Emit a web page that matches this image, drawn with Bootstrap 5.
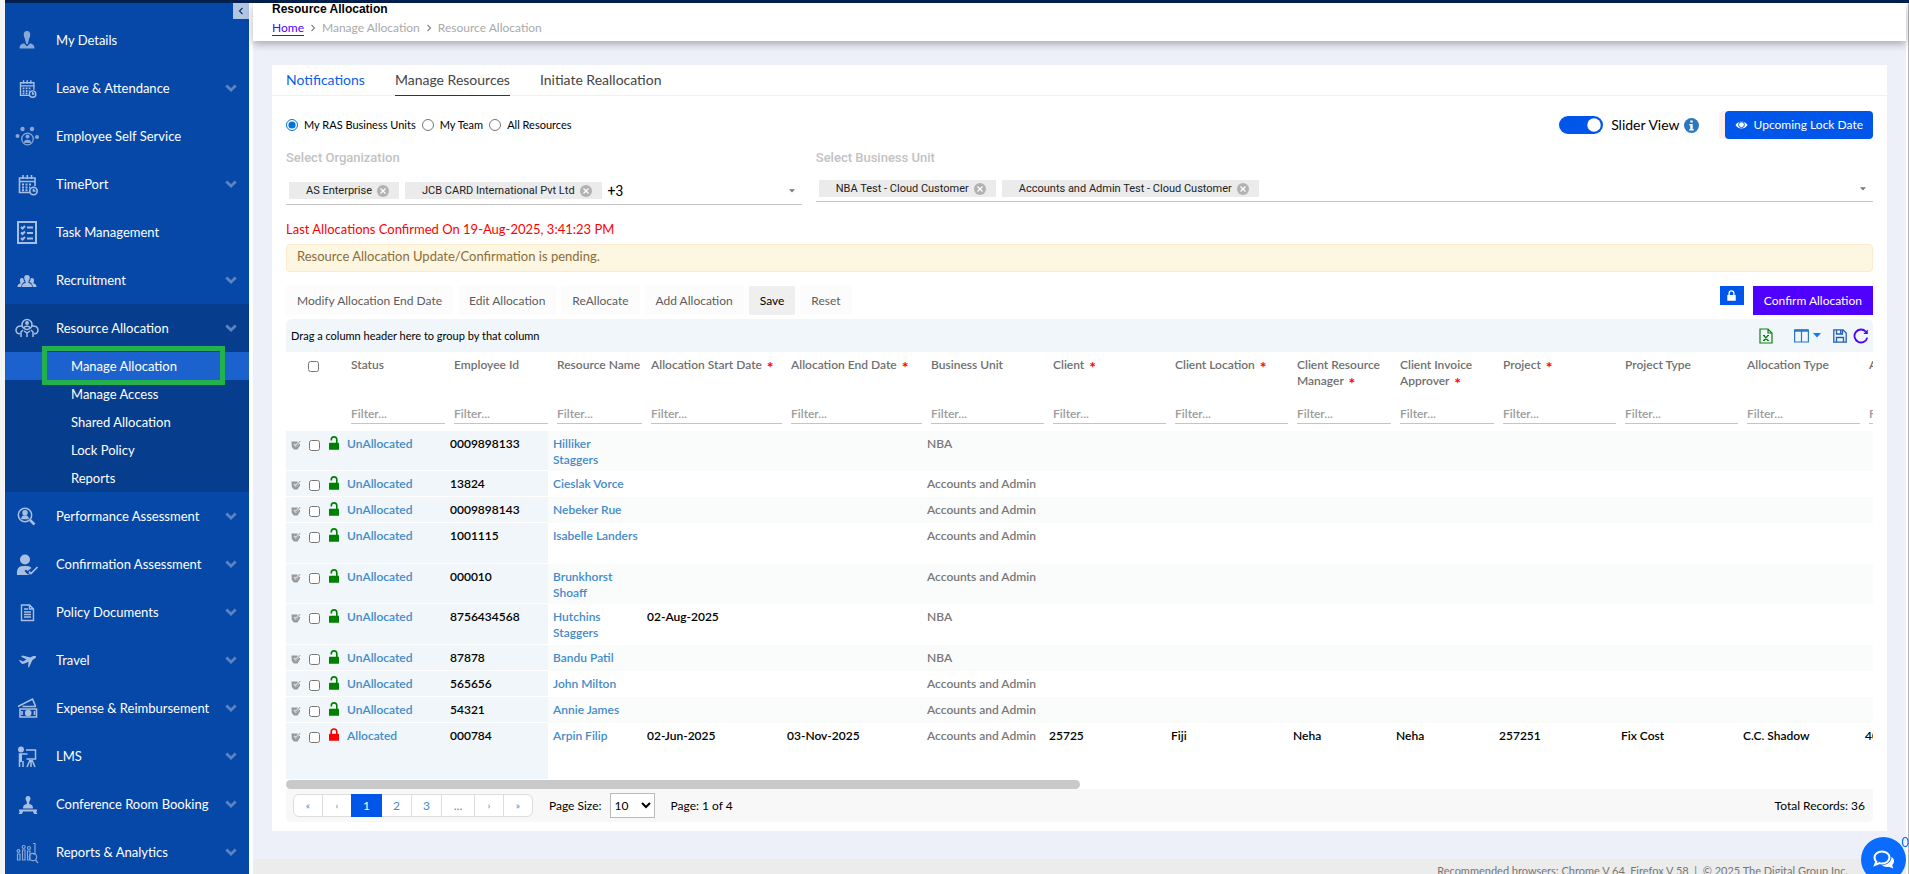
<!DOCTYPE html>
<html lang="en">
<head>
<meta charset="utf-8">
<meta name="viewport" content="width=device-width, initial-scale=1">
<title>Resource Allocation</title>
<link rel="stylesheet" href="https://cdn.jsdelivr.net/npm/bootstrap@5.3.0/dist/css/bootstrap.min.css">
<style>
:root{--blue:#0056e8;--violet:#4f00ff;--link:#428bca;--side:#0648a8}
body{font-family:Lato,"Liberation Sans",sans-serif;font-size:13px;line-height:16px;color:#000;background:#f4f4f5;height:100vh;overflow:hidden;padding-left:5px}
svg{display:block;flex:none}
a{text-decoration:none}
.topline{height:3px;background:#02204f}
.shell{height:calc(100vh - 3px);border-right:1px solid #b5b5b8}
.sidebar{width:244px;background:var(--side);flex:none;padding-top:13px;position:relative}
.toggle{position:absolute;right:0;top:0;width:16px;height:16px;padding:0;border:0;background:#b1c5e5;color:#16345f;display:grid;place-items:center}
.side-link{display:flex;align-items:center;height:48px;padding:0 12px 1px 9px;color:#fff;font-size:13px;line-height:20px}
.side-link .ico{width:26px;height:26px;margin-right:16px;color:#a9bfe2}
.side-link .chev{width:12px;height:8px;margin-left:auto;color:#5d84bf}
.side-link:hover,.sub-link:hover{color:#fff}
.open-group{background:#063d8d}
.sub-link{display:block;height:28px;line-height:28px;padding-left:66px;color:#fff;font-size:13px}
.sub-link.current{background:#1c62ce;position:relative}
.sub-link.current::after{content:"";position:absolute;left:37px;right:24px;top:-6px;bottom:-5px;border:5px solid #22b14c}
.main-pane{margin-left:4px;background:#edf0f9;border-right:2px solid #fff;min-width:0}
.gutter{background:#fff}
.page-head{background:#fff;height:38px;padding:0 19px;box-shadow:0 3px 8px rgba(0,0,0,.3);flex:none;position:relative}
.page-title{font:bold 12px/12px "Liberation Sans",Arial,sans-serif;margin:0}
.crumbs{font-size:12px;line-height:16px;color:#aaa;margin-top:5px;gap:6px}
.crumbs a{color:var(--violet);border-bottom:1px solid var(--violet);line-height:14px}
.panel{background:#fff;margin:24px 19px 28px;padding-bottom:9px}
.tabs{border-bottom:1px solid #f1f1f3;padding:0 14px;gap:30px}
.tabs a{font-size:14px;line-height:30px;height:31px;color:#444;margin-bottom:-1px;border-bottom:1px solid transparent}
.tabs a.unread{color:#0b5ee8}
.tabs a.current{border-color:var(--violet)}
.panel-body{padding:15px 14px 0}
.scope{font-size:11px;gap:6px}
.scope input{margin:0;width:12px;height:12px;accent-color:#0075d8}
.slider-view{font-size:14px}
.slider-view .form-check-input{width:44px;height:18px;margin:0;border:0;background-color:var(--blue)}
.lockdate{background:var(--blue);color:#fff;border:0;border-radius:4px;height:28px;padding:0 10px;font-size:12px;box-shadow:-6px 0 0 #fee;gap:6px;margin-left:26px}
.fields{margin-top:11px;gap:14px}
.field-label{font:500 13px/16px Roboto,sans-serif;color:#c2c2c2}
.picker{border-bottom:1px solid #c4c4c4;margin-top:14px;gap:6px;padding:2px 7px 5px 3px;font-family:Roboto,sans-serif}
.unit-field .picker{margin-top:12px;padding-bottom:4px}
.chip{background:#ebebeb;height:17px;font-size:11px;line-height:17px;padding:0 10px 0 17px;gap:5px;color:#222}
.more{font-size:14px}
.chip svg{width:12px;height:12px;color:#b2b2b2}
.chip button,.picker>button{border:0;background:none;padding:0}
.confirmed{color:red;font-size:13px;line-height:20px;margin-top:14px}
.unit-field{min-width:0}
.notice{background:#fdf6e1;border:1px solid #faebcc;border-radius:4px;color:#8a6d3b;font-size:13px;line-height:20px;padding:1px 10px 5px;margin-top:5px}
.tools{margin-top:14px;gap:5px}
.tools .tool{border:0;background:#fcfcfc;color:#5c5c5c;height:29px;padding:0 11px;font-size:12px}
.tools .tool.ready{background:#efefef;color:#000}
.lockbtn{border:0;padding:0;background:var(--blue);color:#fff;width:24px;height:19px;display:grid;place-items:center;margin-right:4px}
.tools .confirm{background:var(--violet);color:#fff;border:0;height:29px;padding:0 11px;font-size:12px}
.groupbar{background:#f0f6f9;border-radius:6px 6px 0 0;height:33px;padding:0 4px 0 5px;margin-top:4px;font-size:11px}
.groupbar button{border:0;background:none;padding:0}
.act-cols{margin-left:21px}.act-save{margin-left:12px}.act-refresh{margin-left:6px}
.grid-wrap{overflow:hidden}
.grid-table{table-layout:fixed;width:1696px;font-size:12px;font-weight:600;margin:0}
.c-pick{width:56px}.c-a{width:103px}.c-name{width:94px}.c-date{width:140px}.c-b{width:122px}
.grid-table th{height:79px;padding:5px 0 7px 9px;vertical-align:top;color:#707070;font-weight:600}
.th-box{display:flex;flex-direction:column;justify-content:space-between;height:67px}
.grid-table th input:not([type=checkbox]){width:100%;height:21px;border:0;border-bottom:1px solid #c4c4c4;padding:0;font-weight:600;color:#707070}
.grid-table th input::placeholder{color:#9b9b9b;opacity:1}
.grid-table i{color:red;font:bold 16px/8px Lato,sans-serif;margin-left:2px;vertical-align:-4px}
.grid-table td{padding:5px 4px 3px 5px;vertical-align:top;height:26px}
.grid-table tbody tr:nth-child(odd){background:#fafcfb}
.grid-table td:nth-child(-n+3){background:#f0f6f9;box-shadow:inset 0 -1px #fff}
.grid-table tr.roomy td{height:41px}
.grid-table tr.last td{height:57px}
.grid-table td a{color:var(--link)}
.grid-table td.unit{color:#777}
.grid-table input[type=checkbox]{width:11px;height:11px;margin:0;display:block}
.grid-table .pick-all{margin:4px 0 0 13px!important}
.picks{display:flex;align-items:center;height:16px}
.picks input{margin:2px 9px 0 8px!important}
.picks .edit{margin-top:2px;color:#999}
.picks .lk{margin-top:-3px;color:green}
.picks .lk.shut{color:red}
.thumb{width:50%;height:9px;border-radius:5px;background:#c9c9c9}
.pager{background:#f8f8f8;border-radius:0 0 5px 5px;height:33px;padding:0 8px 0 7px;font-size:12px}
.pages .page-link{height:23px;padding:0;line-height:21px;text-align:center;color:var(--link);font-size:12px;border-color:#ddd}
.pages .active .page-link{background:var(--blue);border-color:var(--blue);color:#fff}
.pages .tiny{font-size:10px}
.pages .w1{width:30px}.pages .w2{width:31px}.pages .w3{width:34px}
.pager select{width:45px;height:25px;border:1px solid #bbb;background:#fff;font-size:12px;margin:0 16px 0 8px}
.foot{flex:1 0 15px;background:#ececec;color:#777;font-size:11px;line-height:16px;padding:4px 58px 0 0}
.chat{position:fixed;right:3px;bottom:-8px;width:45px;height:45px;border-radius:50%;border:0;padding:0;background:#0a6cff;color:#fff;display:grid;place-items:center}
.chat-count{position:fixed;right:0;bottom:24px;color:#0a6cff;font-size:13px;line-height:16px}
</style>
</head>
<body>
<svg width="0" height="0" class="position-absolute" aria-hidden="true">
<symbol id="chev" viewBox="0 0 12 8"><path d="M1.300 1.500 6 6l4.700-4.500" fill="none" stroke="currentColor" stroke-width="2.800"/></symbol>
<symbol id="x" viewBox="0 0 12 12"><circle cx="6" cy="6" r="6" fill="currentColor"/><path d="m3.500 3.500 5 5m0-5-5 5" stroke="#fff" stroke-width="1.200"/></symbol>
<symbol id="caret" viewBox="0 0 8 5"><path d="M0 0h8L4 4.500z" fill="currentColor"/></symbol>
<symbol id="lock" viewBox="0 0 10 13"><path d="M2.200 6V3.800a2.800 2.800 0 0 1 5.600 0V6" fill="none" stroke="currentColor" stroke-width="1.600"/><rect y="5.800" width="10" height="7" rx=".6" fill="currentColor"/></symbol>
<symbol id="unlock" viewBox="0 0 10 14"><path d="M7.800 7V3.600a2.700 2.700 0 0 0-5.500 0V4.600" fill="none" stroke="currentColor" stroke-width="1.600"/><rect y="6.800" width="10" height="7" rx=".4" fill="currentColor"/></symbol>
<symbol id="edit" viewBox="0 0 10 10"><path d="M.5 1.500h6v1.300L4.800 4.600 3.500 3.500 2.300 4.700l2.500 2.600L8 3.800 9 4v1.500L6.500 9.500H3L.8 7z" fill="currentColor"/><path d="m2.800 4.300 2 2L9.200 1" fill="none" stroke="currentColor"/></symbol>
<symbol id="cal" viewBox="0 0 26 26"><g fill="none" stroke="currentColor" stroke-width="1.600"><path d="M21 15V7H5.500v14.500H16M5.500 10.500H21M9 4v4m4.300-4v4M17.500 4v4"/><circle cx="19.500" cy="20" r="3.700"/><path d="M19.500 17.700V20h2"/><path d="M8 13.500h10M8 16.500h8M8 19.300h6" stroke-dasharray="2 1.500" stroke-width="2"/></g></symbol>
<symbol id="person" viewBox="0 0 26 26"><g fill="currentColor"><path d="M13 4c2.500 0 3.500 1.800 3.200 4-.2 2-.8 3.200-1.200 4l-1.200 5h-1.600L11 12c-.4-.8-1-2-1.200-4C9.500 5.800 10.500 4 13 4z"/><path d="M5.500 21.500c0-3 1.200-4.500 4.500-5.300l2.600 2.800h.8l2.600-2.800c3.300.8 4.500 2.300 4.500 5.300z"/></g></symbol>
</svg>

<div class="topline"></div>
<div class="shell d-flex gutter">
  <nav class="sidebar" aria-label="Main menu">
    <button class="toggle" type="button" aria-label="Collapse menu"><svg width="6" height="8" viewBox="0 0 6 8"><path d="M4.500 1 1.500 4l3 3" fill="none" stroke="currentColor" stroke-width="1.200"/></svg></button>
    <a class="side-link" href="#"><svg class="ico" opacity=".8"><use href="#person"/></svg>My Details</a>
    <a class="side-link" href="#"><svg class="ico" viewBox="-2 -2 30 30"><use href="#cal" width="26" height="26"/></svg>Leave &amp; Attendance<svg class="chev"><use href="#chev"/></svg></a>
    <a class="side-link" href="#"><svg class="ico" viewBox="0 0 26 26" opacity=".8"><g fill="currentColor"><circle cx="8.500" cy="6" r="2.200"/><circle cx="18" cy="6" r="2.200"/><circle cx="3.500" cy="13" r="2"/><circle cx="23" cy="14" r="2"/><circle cx="13.500" cy="13.500" r="2"/><path d="M10 20c0-2 1-3.200 3.500-3.200S17 18 17 20z"/></g><circle cx="13.500" cy="16" r="5.800" fill="none" stroke="currentColor" stroke-width="1.300"/></svg>Employee Self Service</a>
    <a class="side-link" href="#"><svg class="ico"><use href="#cal"/></svg>TimePort<svg class="chev"><use href="#chev"/></svg></a>
    <a class="side-link" href="#"><svg class="ico" viewBox="0 0 26 26" fill="none" stroke="currentColor" stroke-width="2"><path d="M4 3h18v21H4z"/><path d="m7 8 1.500 1.500L11 7m-4 6.500L8.500 15l2.500-2.500M7 19l1.500 1.500L11 18M13 8.500h6M13 14h6m-6 5.500h6"/></svg>Task Management</a>
    <a class="side-link" href="#"><svg class="ico" viewBox="0 0 26 26" fill="currentColor"><path d="M13 8c2.300 0 3 1.500 2.700 3.300-.2 1.500-.8 2.300-1.200 2.800v1.800c2.500.6 3.500 1.300 3.500 4.100H8c0-2.800 1-3.500 3.500-4.100v-1.800c-.4-.5-1-1.300-1.200-2.800C10 9.500 10.700 8 13 8z"/><path d="M8 11c1 0 1.300.5 1.500 1.300.3 1.500.8 2 1.200 2.500-1.900 1-3.200 2-3.500 5.200H3.500c0-2.300 1-3.300 3.200-3.800-1.200-2-1.200-5.200 1.300-5.200zM18 11c-1 0-1.300.5-1.500 1.300-.3 1.500-.8 2-1.200 2.500 1.900 1 3.200 2 3.500 5.200h3.700c0-2.300-1-3.300-3.200-3.800 1.200-2 1.200-5.200-1.300-5.200z"/></svg>Recruitment<svg class="chev"><use href="#chev"/></svg></a>
    <div class="open-group">
      <a class="side-link" href="#"><svg class="ico" viewBox="0 0 26 26" fill="none" stroke="currentColor" stroke-width="1.500"><circle cx="13" cy="9.500" r="5"/><circle cx="13" cy="8" r="1.200" fill="currentColor"/><path d="M10 13c.3-2.500 5.700-2.500 6 0M8 11c-3-.5-6 1-6 4s2 4 4 3.500m12-7.500c3-.5 6 1 6 4s-2 4-4 3.500M7 22v-5l2-2m10 7v-5l-2-2M13 22v-4l-3-2m3 2 3-2"/></svg>Resource Allocation<svg class="chev"><use href="#chev"/></svg></a>
      <a class="sub-link current" href="#">Manage Allocation</a>
      <a class="sub-link" href="#">Manage Access</a>
      <a class="sub-link" href="#">Shared Allocation</a>
      <a class="sub-link" href="#">Lock Policy</a>
      <a class="sub-link" href="#">Reports</a>
    </div>
    <a class="side-link" href="#"><svg class="ico" viewBox="0 0 26 26" fill="none" stroke="currentColor" stroke-width="1.500"><circle cx="11" cy="12" r="6.700"/><path d="m16 17 4.500 4.500" stroke-width="2.500"/><circle cx="11" cy="9.800" r="2" fill="currentColor"/><path d="M8 15.500c.3-3.500 5.700-3.500 6 0z" fill="currentColor"/></svg>Performance Assessment<svg class="chev"><use href="#chev"/></svg></a>
    <a class="side-link" href="#"><svg class="ico" viewBox="0 0 26 26"><circle cx="11" cy="8.500" r="5" fill="currentColor"/><path d="M3 24c-.5-6 1.500-9 6-9h4c2 0 3.500.7 4.500 2l-4 3-1.500-1.500L10.500 20l3.300 3.500 3-2.200c-.8 2-1.500 2.700-3 2.700z" fill="currentColor"/><path d="m15 20.500 2 2 6.500-6.500" fill="none" stroke="currentColor" stroke-width="1.700"/></svg>Confirmation Assessment<svg class="chev"><use href="#chev"/></svg></a>
    <a class="side-link" href="#"><svg class="ico" viewBox="0 0 26 26" fill="none" stroke="currentColor" stroke-width="1.400"><path d="M7.500 6h8l4 4v11.500h-12zM15.500 6v4h4M10 10h4m-4 3h7m-7 2.500h7M10 18h7"/></svg>Policy Documents<svg class="chev"><use href="#chev"/></svg></a>
    <a class="side-link" href="#"><svg class="ico" viewBox="0 0 26 26" fill="currentColor"><path d="M22 9.500c-.8-.8-3.500-.3-5.500.9L8.500 8.500 7 9.500l5.500 3-3.500 2-3-1.500-1 .6L8 17c2.500-.3 4-1 6.500-2.200L14 20.500l1.300-.7L18.500 13c2-1.200 4.200-2.500 3.500-3.500z"/></svg>Travel<svg class="chev"><use href="#chev"/></svg></a>
    <a class="side-link" href="#"><svg class="ico" viewBox="0 0 26 26" fill="none" stroke="currentColor" stroke-width="1.600"><path d="M6 14h16.500v8H6zM7 22h15M4 11.500 18.500 4l3 7M8.500 11.500H22"/><circle cx="14.200" cy="18" r="2.500" fill="currentColor"/><path d="M8 16v4m12.500-4v4"/></svg>Expense &amp; Reimbursement<svg class="chev"><use href="#chev"/></svg></a>
    <a class="side-link" href="#"><svg class="ico" viewBox="0 0 26 26" fill="none" stroke="currentColor" stroke-width="1.500"><circle cx="7" cy="6.500" r="2.200" fill="currentColor"/><path d="M5.500 24V11h8M9 24v-6m3-11h9.500v9h-9m3.500 1-3 7m4-7v7m1-7 3 7"/><path d="M6.500 11v8" stroke-width="3"/></svg>LMS<svg class="chev"><use href="#chev"/></svg></a>
    <a class="side-link" href="#"><svg class="ico" viewBox="0 0 26 26" fill="currentColor"><path d="M14 5c2 0 2.600 1.400 2.400 3-.2 1.300-.8 2.200-1.200 2.700V13c2.500.6 3.800 1.500 3.800 4.500H9c0-3 1.300-3.900 3.800-4.500v-2.300c-.4-.5-1-1.400-1.200-2.700C11.400 6.400 12 5 14 5zM5 18.500h18v2H5zM6 20.500h3l-1 2.500H4.500zM19 20.500h3l1.500 2.500H20z"/></svg>Conference Room Booking<svg class="chev"><use href="#chev"/></svg></a>
    <a class="side-link" href="#"><svg class="ico" viewBox="0 0 26 26" fill="none" stroke="currentColor" stroke-width="1.200" opacity=".8"><path d="M3.500 15h2.500v6H3.500zM8.500 11H11v10H8.500zM13.500 12H16v9h-2.500zM19 4.500h2V15h-2"/><circle cx="4.500" cy="12" r="1.400"/><circle cx="9.700" cy="8" r="1.500"/><circle cx="15" cy="9" r="1.500"/><circle cx="19" cy="18" r="3.700"/><path d="m21.500 21 2.500 3"/></svg>Reports &amp; Analytics<svg class="chev"><use href="#chev"/></svg></a>
  </nav>

  <div class="main-pane flex-grow-1 d-flex flex-column">
    <header class="page-head">
      <h1 class="page-title">Resource Allocation</h1>
      <nav class="crumbs d-flex align-items-center" aria-label="Breadcrumb">
        <a href="#">Home</a>
        <svg width="6" height="8" viewBox="0 0 6 8"><path d="m1.500 1 3 3-3 3" fill="none" stroke="#888" stroke-width="1.200"/></svg>
        <span>Manage Allocation</span>
        <svg width="6" height="8" viewBox="0 0 6 8"><path d="m1.500 1 3 3-3 3" fill="none" stroke="#888" stroke-width="1.200"/></svg>
        <span>Resource Allocation</span>
      </nav>
    </header>

    <main class="panel">
      <nav class="tabs d-flex" aria-label="Sections">
        <a class="unread" href="#">Notifications</a>
        <a class="current" href="#">Manage Resources</a>
        <a href="#">Initiate Reallocation</a>
      </nav>
      <div class="panel-body">
        <div class="d-flex align-items-center">
          <div class="scope d-flex align-items-center">
            <input type="radio" name="scope" id="s1" checked><label for="s1">My RAS Business Units</label>
            <input type="radio" name="scope" id="s2"><label for="s2">My Team</label>
            <input type="radio" name="scope" id="s3"><label for="s3">All Resources</label>
          </div>
          <div class="slider-view d-flex align-items-center ms-auto form-switch p-0">
            <input class="form-check-input me-2" type="checkbox" role="switch" id="slider" checked>
            <label for="slider">Slider View</label>
            <svg class="ms-1" width="15" height="15" viewBox="0 0 15 15"><circle cx="7.500" cy="7.500" r="7.500" fill="#2a78bf"/><path d="M6.300 2.500h2.400v2H6.300zM5.300 6h3.400v5h1v1.500H5.300V11h1V7.500h-1z" fill="#fff"/></svg>
          </div>
          <button class="lockdate d-flex align-items-center" type="button"><svg width="13" height="10" viewBox="0 0 13 10"><path d="M.5 5C3.500.2 9.500.2 12.500 5 9.500 9.800 3.500 9.800.5 5z" fill="#fff"/><circle cx="6.500" cy="4.700" r="2.900" fill="none" stroke="#0056e8"/></svg>Upcoming Lock Date</button>
        </div>

        <div class="fields d-flex">
          <div style="width:32.500%">
            <div class="field-label">Select Organization</div>
            <div class="picker d-flex align-items-center">
              <span class="chip d-flex align-items-center">AS Enterprise<button type="button" aria-label="Remove"><svg><use href="#x"/></svg></button></span>
              <span class="chip d-flex align-items-center">JCB CARD International Pvt Ltd<button type="button" aria-label="Remove"><svg><use href="#x"/></svg></button></span>
              <span class="more">+3</span>
              <button class="ms-auto" type="button" aria-label="Open organizations"><svg width="6" height="4" color="#777"><use href="#caret"/></svg></button>
            </div>
          </div>
          <div class="unit-field flex-grow-1">
            <div class="field-label">Select Business Unit</div>
            <div class="picker d-flex align-items-center">
              <span class="chip d-flex align-items-center">NBA Test - Cloud Customer<button type="button" aria-label="Remove"><svg><use href="#x"/></svg></button></span>
              <span class="chip d-flex align-items-center">Accounts and Admin Test - Cloud Customer<button type="button" aria-label="Remove"><svg><use href="#x"/></svg></button></span>
              <button class="ms-auto" type="button" aria-label="Open business units"><svg width="6" height="4" color="#777"><use href="#caret"/></svg></button>
            </div>
          </div>
        </div>

        <div class="confirmed">Last Allocations Confirmed On 19-Aug-2025, 3:41:23 PM</div>
        <div class="notice" role="status">Resource Allocation Update/Confirmation is pending.</div>

        <div class="tools d-flex align-items-start">
          <button class="tool" type="button">Modify Allocation End Date</button>
          <button class="tool" type="button">Edit Allocation</button>
          <button class="tool" type="button">ReAllocate</button>
          <button class="tool" type="button">Add Allocation</button>
          <button class="tool ready" type="button">Save</button>
          <button class="tool" type="button">Reset</button>
          <button class="lockbtn ms-auto" type="button" aria-label="Lock"><svg width="9" height="11"><use href="#lock"/></svg></button>
          <button class="confirm" type="button">Confirm Allocation</button>
        </div>

        <div class="groupbar d-flex align-items-center">
          <span>Drag a column header here to group by that column</span>
          <button class="ms-auto" type="button" aria-label="Export to Excel"><svg width="14" height="16" viewBox="0 0 14 16" fill="none" stroke="#108010" stroke-width="1.200"><path d="M1 1h8l4 4v10H1zM9 1v4h4M4.800 7.500 9 12.500M9 7.500l-4.200 5M4 7.500h2m2 0h2m-6 5h2m2 0h2"/></svg></button>
          <button class="act-cols d-flex align-items-center gap-1" type="button" aria-label="Columns"><svg width="15" height="14" viewBox="0 0 15 14" fill="none" stroke="#2a78c8" stroke-width="1.200"><path d="M.6 1h13.800v12H.6zM7.500 1v12"/><path d="M.6 1.500h13.800" stroke-width="2.500"/></svg><svg width="8" height="5" color="#0a7aff"><use href="#caret"/></svg></button>
          <button class="act-save" type="button" aria-label="Save layout"><svg width="14" height="14" viewBox="0 0 14 14" fill="none" stroke="#1f5fb4" stroke-width="1.300"><path d="M.8.800H10L13.200 4v9.200H.8zM3.500 13V8.500h7V13M3.500 1v4h6V1M7.700 1.500v3"/></svg></button>
          <button class="act-refresh" type="button" aria-label="Refresh"><svg width="16" height="16" viewBox="0 0 16 16"><path d="M12.800 3.600a6.500 6.500 0 1 0 1.500 6" fill="none" stroke="#4f00ff" stroke-width="1.800"/><path d="M14.800 1.500v4.500h-4.500z" fill="#4f00ff"/></svg></button>
        </div>

        <div class="grid-wrap">
          <table class="grid-table">
            <colgroup><col class="c-pick"><col class="c-a"><col class="c-a"><col class="c-name"><col class="c-date"><col class="c-date"><col class="c-b"><col class="c-b"><col class="c-b"><col class="c-a"><col class="c-a"><col class="c-b"><col class="c-b"><col class="c-b"><col></colgroup>
            <thead>
              <tr>
                <th><input class="pick-all" type="checkbox" aria-label="Select all rows"></th>
                <th><div class="th-box"><span>Status</span><input placeholder="Filter..." aria-label="Filter status"></div></th>
                <th><div class="th-box"><span>Employee Id</span><input placeholder="Filter..." aria-label="Filter employee id"></div></th>
                <th><div class="th-box"><span>Resource Name</span><input placeholder="Filter..." aria-label="Filter resource name"></div></th>
                <th><div class="th-box"><span>Allocation Start Date <i>*</i></span><input placeholder="Filter..." aria-label="Filter start date"></div></th>
                <th><div class="th-box"><span>Allocation End Date <i>*</i></span><input placeholder="Filter..." aria-label="Filter end date"></div></th>
                <th><div class="th-box"><span>Business Unit</span><input placeholder="Filter..." aria-label="Filter business unit"></div></th>
                <th><div class="th-box"><span>Client <i>*</i></span><input placeholder="Filter..." aria-label="Filter client"></div></th>
                <th><div class="th-box"><span>Client Location <i>*</i></span><input placeholder="Filter..." aria-label="Filter client location"></div></th>
                <th><div class="th-box"><span>Client Resource Manager <i>*</i></span><input placeholder="Filter..." aria-label="Filter client resource manager"></div></th>
                <th><div class="th-box"><span>Client Invoice Approver <i>*</i></span><input placeholder="Filter..." aria-label="Filter client invoice approver"></div></th>
                <th><div class="th-box"><span>Project <i>*</i></span><input placeholder="Filter..." aria-label="Filter project"></div></th>
                <th><div class="th-box"><span>Project Type</span><input placeholder="Filter..." aria-label="Filter project type"></div></th>
                <th><div class="th-box"><span>Allocation Type</span><input placeholder="Filter..." aria-label="Filter allocation type"></div></th>
                <th><div class="th-box"><span>Allocation</span><input placeholder="Filter..." aria-label="Filter allocation"></div></th>
              </tr>
            </thead>
            <tbody>
              <tr><td><div class="picks"><svg class="edit" width="10" height="10"><use href="#edit"/></svg><input type="checkbox" aria-label="Select row"><svg class="lk" width="10" height="14"><use href="#unlock"/></svg></div></td><td><a href="#">UnAllocated</a></td><td>0009898133</td><td><a href="#">Hilliker Staggers</a></td><td></td><td></td><td class="unit">NBA</td><td colspan="8"></td></tr>
              <tr><td><div class="picks"><svg class="edit" width="10" height="10"><use href="#edit"/></svg><input type="checkbox" aria-label="Select row"><svg class="lk" width="10" height="14"><use href="#unlock"/></svg></div></td><td><a href="#">UnAllocated</a></td><td>13824</td><td><a href="#">Cieslak Vorce</a></td><td></td><td></td><td class="unit">Accounts and Admin</td><td colspan="8"></td></tr>
              <tr><td><div class="picks"><svg class="edit" width="10" height="10"><use href="#edit"/></svg><input type="checkbox" aria-label="Select row"><svg class="lk" width="10" height="14"><use href="#unlock"/></svg></div></td><td><a href="#">UnAllocated</a></td><td>0009898143</td><td><a href="#">Nebeker Rue</a></td><td></td><td></td><td class="unit">Accounts and Admin</td><td colspan="8"></td></tr>
              <tr class="roomy"><td><div class="picks"><svg class="edit" width="10" height="10"><use href="#edit"/></svg><input type="checkbox" aria-label="Select row"><svg class="lk" width="10" height="14"><use href="#unlock"/></svg></div></td><td><a href="#">UnAllocated</a></td><td>1001115</td><td><a href="#">Isabelle Landers</a></td><td></td><td></td><td class="unit">Accounts and Admin</td><td colspan="8"></td></tr>
              <tr><td><div class="picks"><svg class="edit" width="10" height="10"><use href="#edit"/></svg><input type="checkbox" aria-label="Select row"><svg class="lk" width="10" height="14"><use href="#unlock"/></svg></div></td><td><a href="#">UnAllocated</a></td><td>000010</td><td><a href="#">Brunkhorst Shoaff</a></td><td></td><td></td><td class="unit">Accounts and Admin</td><td colspan="8"></td></tr>
              <tr class="roomy"><td><div class="picks"><svg class="edit" width="10" height="10"><use href="#edit"/></svg><input type="checkbox" aria-label="Select row"><svg class="lk" width="10" height="14"><use href="#unlock"/></svg></div></td><td><a href="#">UnAllocated</a></td><td>8756434568</td><td><a href="#">Hutchins Staggers</a></td><td>02-Aug-2025</td><td></td><td class="unit">NBA</td><td colspan="8"></td></tr>
              <tr><td><div class="picks"><svg class="edit" width="10" height="10"><use href="#edit"/></svg><input type="checkbox" aria-label="Select row"><svg class="lk" width="10" height="14"><use href="#unlock"/></svg></div></td><td><a href="#">UnAllocated</a></td><td>87878</td><td><a href="#">Bandu Patil</a></td><td></td><td></td><td class="unit">NBA</td><td colspan="8"></td></tr>
              <tr><td><div class="picks"><svg class="edit" width="10" height="10"><use href="#edit"/></svg><input type="checkbox" aria-label="Select row"><svg class="lk" width="10" height="14"><use href="#unlock"/></svg></div></td><td><a href="#">UnAllocated</a></td><td>565656</td><td><a href="#">John Milton</a></td><td></td><td></td><td class="unit">Accounts and Admin</td><td colspan="8"></td></tr>
              <tr><td><div class="picks"><svg class="edit" width="10" height="10"><use href="#edit"/></svg><input type="checkbox" aria-label="Select row"><svg class="lk" width="10" height="14"><use href="#unlock"/></svg></div></td><td><a href="#">UnAllocated</a></td><td>54321</td><td><a href="#">Annie James</a></td><td></td><td></td><td class="unit">Accounts and Admin</td><td colspan="8"></td></tr>
              <tr class="last"><td><div class="picks"><svg class="edit" width="10" height="10"><use href="#edit"/></svg><input type="checkbox" aria-label="Select row"><svg class="lk shut" width="10" height="13"><use href="#lock"/></svg></div></td><td><a href="#">Allocated</a></td><td>000784</td><td><a href="#">Arpin Filip</a></td><td>02-Jun-2025</td><td>03-Nov-2025</td><td class="unit">Accounts and Admin</td><td>25725</td><td>Fiji</td><td>Neha</td><td>Neha</td><td>257251</td><td>Fix Cost</td><td>C.C. Shadow</td><td>40</td></tr>
            </tbody>
          </table>
          <div class="thumb"></div>
        </div>

        <div class="pager d-flex align-items-center">
          <ul class="pagination pages mb-0">
            <li class="page-item"><a class="page-link w1 tiny" href="#" aria-label="First">«</a></li>
            <li class="page-item"><a class="page-link w1 tiny" href="#" aria-label="Previous">‹</a></li>
            <li class="page-item active"><a class="page-link w2" href="#">1</a></li>
            <li class="page-item"><a class="page-link w2" href="#">2</a></li>
            <li class="page-item"><a class="page-link w2" href="#">3</a></li>
            <li class="page-item"><a class="page-link w3" href="#">...</a></li>
            <li class="page-item"><a class="page-link w1 tiny" href="#" aria-label="Next">›</a></li>
            <li class="page-item"><a class="page-link w1 tiny" href="#" aria-label="Last">»</a></li>
          </ul>
          <label class="ms-3" for="psize">Page Size:</label>
          <select id="psize"><option>10</option><option>20</option></select>
          <span>Page: 1 of 4</span>
          <span class="ms-auto">Total Records: 36</span>
        </div>
      </div>
    </main>

    <footer class="foot text-end">Recommended browsers: Chrome V 64, Firefox V 58 &nbsp;|&nbsp; © 2025 The Digital Group Inc.</footer>
  </div>
</div>
<button class="chat" type="button" aria-label="Open chat"><svg width="24" height="24" viewBox="0 0 24 24" fill="none" stroke="#fff" stroke-width="2"><path d="M10 3.500c4.200 0 7.500 2.700 7.500 6S14.200 15.500 10 15.500c-1 0-1.800-.1-2.600-.4L3 17l1.300-3.300C3 12.600 2.500 11 2.500 9.500c0-3.300 3.300-6 7.500-6z"/><path d="M19.500 9c1.700 1 2.500 2.500 2.500 4 0 1.600-.6 3-1.800 4l1 3.500-4-1.800c-3 .7-5.700 0-7.200-1.700 5 .2 9.500-3 9.500-8z" fill="#fff" stroke="none"/></svg></button>
<span class="chat-count">0</span>
<script src="https://cdn.jsdelivr.net/npm/bootstrap@5.3.0/dist/js/bootstrap.bundle.min.js"></script>
</body>
</html>
